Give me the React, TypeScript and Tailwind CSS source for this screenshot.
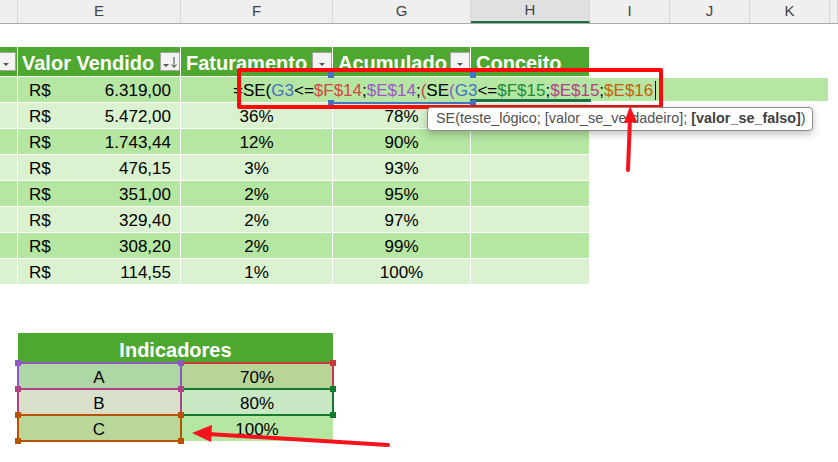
import React from "react";

const COLS = ["w-[18px]", "w-[163px]", "w-[152px]", "w-[138px]", "w-[119px]", "w-[80px]", "w-[80px]", "w-[80px]", "w-[8px]"];
const LETTERS = ["", "E", "F", "G", "H", "I", "J", "K", ""];

const DARK = "bg-[#b5e6a2]";
const LIGHT = "bg-[#daf2d0]";

const rows = [
  { v: "6.319,00", f: "", g: "" },
  { v: "5.472,00", f: "36%", g: "78%" },
  { v: "1.743,44", f: "12%", g: "90%" },
  { v: "476,15", f: "3%", g: "93%" },
  { v: "351,00", f: "2%", g: "95%" },
  { v: "329,40", f: "2%", g: "97%" },
  { v: "308,20", f: "2%", g: "99%" },
  { v: "114,55", f: "1%", g: "100%" },
];

function FilterBtn({ sort }: { sort?: boolean }) {
  return (
    <span className="w-[20px] h-[19px] shrink-0 bg-[#f3f3f3] border border-[#a3a3a3] flex">
      <svg width="18" height="17" viewBox="0 0 18 17">
        {sort ? (
          <>
            <polygon points="2,11 8,11 5,14" fill="#555" />
            <line x1="13" y1="4" x2="13" y2="14" stroke="#444" strokeWidth="1" />
            <polyline points="10.5,11.5 13,14.5 15.5,11.5" fill="none" stroke="#444" strokeWidth="1" />
          </>
        ) : (
          <polygon points="6,10 12,10 9,13" fill="#555" />
        )}
      </svg>
    </span>
  );
}

function RefBox({ cls, handle, box }: { cls: string; handle: string; box: string }) {
  return (
    <div className={`absolute border-2 ${cls} ${box}`}>
      <span className={`absolute w-[6px] h-[6px] left-[-4px] top-[-4px] ${handle}`} />
      <span className={`absolute w-[6px] h-[6px] right-[-4px] top-[-4px] ${handle}`} />
      <span className={`absolute w-[6px] h-[6px] left-[-4px] bottom-[-4px] ${handle}`} />
      <span className={`absolute w-[6px] h-[6px] right-[-4px] bottom-[-4px] ${handle}`} />
    </div>
  );
}

export default function App() {
  return (
    <div className="relative w-[838px] h-[462px] overflow-hidden bg-white text-black" style={{ fontFamily: '"Liberation Sans", Arial, sans-serif' }}>
      {/* column headers */}
      <div className="flex h-[24px] bg-[#efefef] border-b border-[#ababab]">
        {COLS.map((w, i) => (
          <div
            key={i}
            className={`${w} shrink-0 flex items-center justify-center text-[15px] text-[#444] border-r border-[#d8d8d8] ${i === 4 ? "bg-[#e0e0e0] border-b-2 border-b-[#1e7145]" : ""}`}
          >
            {LETTERS[i]}
          </div>
        ))}
      </div>

      <div className="h-[23px]" />

      {/* table header */}
      <div className="flex h-[30px] text-white font-bold text-[20px]">
        <div className={`${COLS[0]} shrink-0 bg-[#4ea72e] border-r border-b border-white flex items-center justify-end pr-[1px]`}>
          <FilterBtn />
        </div>
        <div className={`${COLS[1]} shrink-0 bg-[#4ea72e] border-r border-b border-white flex items-center pl-[4px]`}>
          <span className="flex-1 pt-[3px]">Valor Vendido</span>
          <FilterBtn sort />
        </div>
        <div className={`${COLS[2]} shrink-0 bg-[#4ea72e] border-r border-b border-white flex items-center pl-[5px]`}>
          <span className="flex-1 pt-[3px]">Faturamento</span>
          <FilterBtn />
        </div>
        <div className={`${COLS[3]} shrink-0 bg-[#4ea72e] border-r border-b border-white flex items-center pl-[5px]`}>
          <span className="flex-1 pt-[3px]">Acumulado</span>
          <FilterBtn />
        </div>
        <div className={`${COLS[4]} shrink-0 bg-[#4ea72e] border-r border-b border-white flex items-center pl-[5px] pt-[3px]`}>
          Conceito
        </div>
      </div>

      {/* data rows */}
      {rows.map((r, i) => {
        const band = i % 2 === 0 ? DARK : LIGHT;
        return (
          <div key={i} className="flex h-[26px] text-[17px]">
            <div className={`${COLS[0]} shrink-0 ${band} border-r border-b border-white`} />
            <div className={`${COLS[1]} shrink-0 ${band} border-r border-b border-white flex items-center justify-between pl-[11px] pr-[9px] pt-[2px]`}>
              <span>R$</span>
              <span>{r.v}</span>
            </div>
            <div className={`${COLS[2]} shrink-0 ${band} border-r border-b border-white flex items-center justify-center pt-[2px]`}>{r.f}</div>
            <div className={`${COLS[3]} shrink-0 ${band} border-r border-b border-white flex items-center justify-center pt-[2px]`}>{r.g}</div>
            <div className={`${COLS[4]} shrink-0 ${band} border-r border-b border-white`} />
          </div>
        );
      })}

      <div className="h-[48px]" />

      {/* Indicadores */}
      <div className="relative">
        <div className="flex h-[30px]">
          <div className={`${COLS[0]} shrink-0`} />
          <div className="w-[315px] shrink-0 bg-[#4ea72e] flex items-center justify-center pt-[4px] text-white font-bold text-[20px]">Indicadores</div>
        </div>
        {[
          { k: "A", v: "70%", a: "bg-[#afd7a5]", b: "bg-[#b8d598]" },
          { k: "B", v: "80%", a: "bg-[#d8e0ca]", b: "bg-[#c8e7c3]" },
          { k: "C", v: "100%", a: "bg-[#b8d798]", b: "bg-[#b5e6a2]" },
        ].map((r) => (
          <div key={r.k} className="flex h-[26px] text-[17px]">
            <div className={`${COLS[0]} shrink-0`} />
            <div className={`${COLS[1]} shrink-0 ${r.a} border-r border-t border-white flex items-center justify-center pt-[2px]`}>{r.k}</div>
            <div className={`${COLS[2]} shrink-0 ${r.b} border-t border-white flex items-center justify-center pt-[2px]`}>{r.v}</div>
          </div>
        ))}

        <RefBox cls="border-[#c8383e]" handle="bg-[#c8383e]" box="left-[180px] top-[29px] w-[154px] h-[28px]" />
        <RefBox cls="border-[#8c58c0]" handle="bg-[#8c58c0]" box="left-[17px] top-[29px] w-[165px] h-[28px]" />
        <RefBox cls="border-[#137a30]" handle="bg-[#137a30]" box="left-[180px] top-[55px] w-[154px] h-[28px]" />
        <RefBox cls="border-[#b04386]" handle="bg-[#b04386]" box="left-[17px] top-[55px] w-[165px] h-[28px]" />
        <RefBox cls="border-[#b85200]" handle="bg-[#b85200]" box="left-[17px] top-[81px] w-[165px] h-[28px]" />
      </div>

      {/* in-cell formula editor */}
      <div className="absolute left-[182px] top-[78px] w-[646px] h-[23px] bg-[#b5e6a2] flex items-center pl-[51px] pt-[2px] text-[17px] whitespace-nowrap">
        <span>=SE(</span>
        <span className="text-[#4472c4]">G3</span>
        <span>&lt;=</span>
        <span className="text-[#d04848]">$F$14</span>
        <span>;</span>
        <span className="text-[#9b59c8]">$E$14</span>
        <span>;</span>
        <span className="text-[#c83e5a]">(</span>
        <span>SE</span>
        <span className="text-[#9b59c8]">(</span>
        <span className="text-[#4472c4]">G3</span>
        <span>&lt;=</span>
        <span className="text-[#1e8c3e]">$F$15</span>
        <span>;</span>
        <span className="text-[#b0408a]">$E$15</span>
        <span>;</span>
        <span className="text-[#c8600a]">$E$16</span>
        <span className="w-px h-[19px] bg-black ml-[2px]" />
      </div>
      <div className="absolute left-[470px] top-[99px] w-[121px] h-[3px] bg-[#1e7145]" />
      <RefBox cls="border-[#4472c4] border-t-0 border-x-0" handle="bg-[#4472c4]" box="left-[332px] top-[76px] w-[140px] h-[28px]" />

      {/* red annotation box */}
      <div className="absolute left-[237px] top-[68px] w-[426px] h-[41px] border-4 border-[#ff0a0a] rounded-[2px]" />

      {/* tooltip */}
      <div className="absolute left-[427px] top-[107px] w-[386px] h-[24px] bg-white border border-[#8c8c8c] rounded-[4px] shadow-[0_3px_8px_rgba(0,0,0,0.25)] flex items-center pl-[8px] text-[14.4px] text-[#505050] whitespace-nowrap">
        <span>
          SE(teste_lógico; [valor_se_verdadeiro]; <b className="text-[#404040]">[valor_se_falso]</b>)
        </span>
      </div>

      {/* arrows */}
      <svg className="absolute left-0 top-0 pointer-events-none" width="838" height="462">
        <line x1="628" y1="170" x2="630" y2="118" stroke="#f5121c" strokeWidth="4" strokeLinecap="round" />
        <polygon points="630,106 624,123 637,122" fill="#f5121c" />
        <line x1="388" y1="445" x2="208" y2="434" stroke="#f5121c" strokeWidth="4" strokeLinecap="round" />
        <polygon points="192,433 212,425 211,442" fill="#f5121c" />
      </svg>
    </div>
  );
}
